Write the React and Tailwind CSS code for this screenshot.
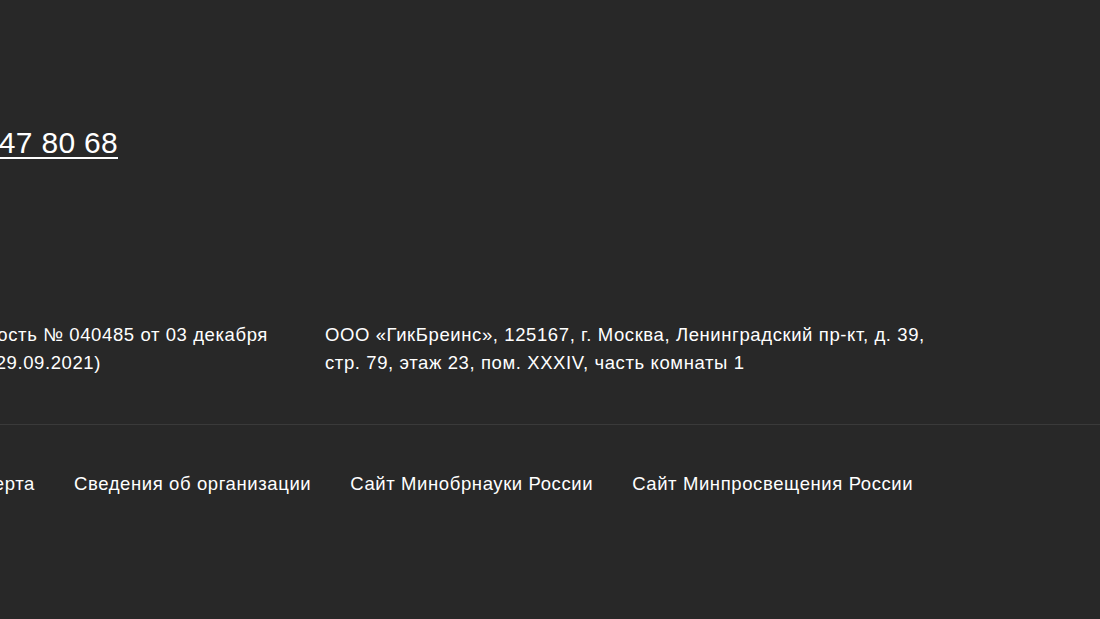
import React from "react";

// ── Footer links row ──────────────────────────────────────────────────────────
const LINKS = [
  "Сведения об организации",
  "Сайт Минобрнауки России",
  "Сайт Минпросвещения России",
];

const App = () => {
  return (
    <footer
      className="min-h-[619px] w-full overflow-hidden bg-[#282828] text-white"
      style={{ fontFamily: '"Liberation Sans", Arial, sans-serif' }}
    >
      {/* Phone */}
      <div className="pt-[125px]">
        <div className="flex w-[118px] justify-end whitespace-nowrap">
          <a href="#" className="text-[30px] leading-[36px] tracking-[0.3px] underline underline-offset-[4px] decoration-2">
            +7 495 647 80 68
          </a>
        </div>
      </div>

      {/* License + address */}
      <div className="mt-[160px] flex text-[18.5px] leading-[28px] tracking-[0.6px]">
        <div className="w-[325px] shrink-0">
          <div className="flex w-[268px] justify-end whitespace-nowrap">
            Лицензия на образовательную деятельность № 040485 от 03 декабря
          </div>
          <div className="flex w-[101px] justify-end whitespace-nowrap">
            2019 (бессрочная, обновлена 29.09.2021)
          </div>
        </div>
        <p className="w-[615px]">
          ООО «ГикБреинс», 125167, г. Москва, Ленинградский пр-кт, д. 39, стр. 79, этаж 23, пом. XXXIV, часть комнаты 1
        </p>
      </div>

      {/* Divider */}
      <div className="mt-[47px] h-px w-full bg-[#3a3a3a]" />

      {/* Links */}
      <nav className="mt-[45px] flex items-center gap-[39px] text-[18.5px] leading-[28px] tracking-[0.6px]">
        <div className="flex w-[35px] shrink-0 justify-end whitespace-nowrap">
          <a href="#">Публичная оферта</a>
        </div>
        {LINKS.map((label) => (
          <a key={label} href="#" className="whitespace-nowrap">
            {label}
          </a>
        ))}
      </nav>
    </footer>
  );
};

export default App;
